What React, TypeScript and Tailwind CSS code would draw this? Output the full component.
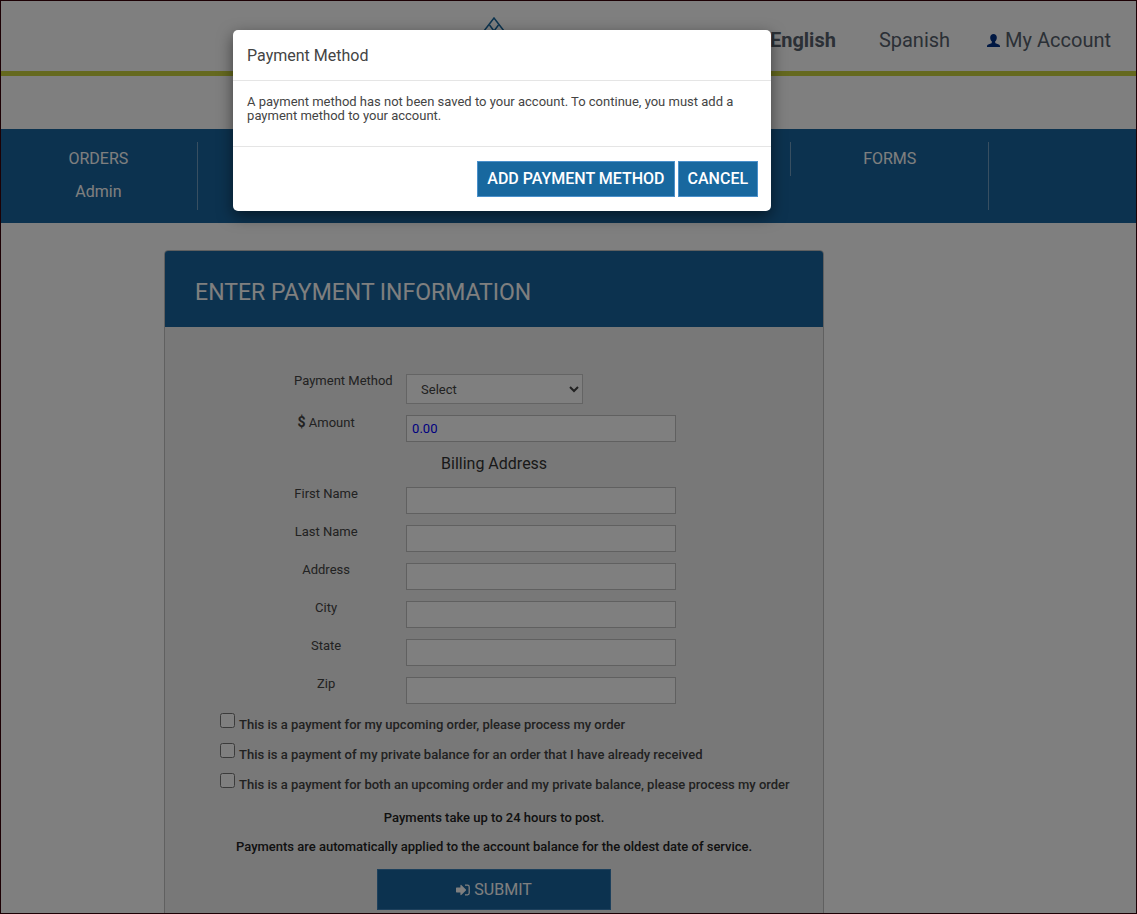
import React, { useState } from 'react';

interface NavColumn {
  id: string;
  items: string[];
}

const navColumns: NavColumn[] = [
  { id: 'orders', items: ['ORDERS', 'Admin'] },
  { id: 'col-2', items: [] },
  { id: 'col-3', items: [] },
  { id: 'col-4', items: [] },
  { id: 'forms', items: ['FORMS'] },
];

const addressFields = [
  { id: 'firstName', label: 'First Name' },
  { id: 'lastName', label: 'Last Name' },
  { id: 'address', label: 'Address' },
  { id: 'city', label: 'City' },
  { id: 'state', label: 'State' },
  { id: 'zip', label: 'Zip' },
];

const paymentOptions = [
  { id: 'upcoming', label: 'This is a payment for my upcoming order, please process my order' },
  { id: 'balance', label: 'This is a payment of my private balance for an order that I have already received' },
  { id: 'both', label: 'This is a payment for both an upcoming order and my private balance, please process my order' },
];

const inputClass = 'h-[27px] w-full border border-[#c0c0c0] bg-white px-[5px] text-[13px] text-[#0000ff]';
const modalButtonClass = 'h-9 border border-[#4a90cb] bg-[#18689f] px-[9px] text-base font-medium text-white';

function UserIcon() {
  return (
    <svg className="h-[13px] w-[13px]" viewBox="0 0 13 13" fill="#003087" aria-hidden="true">
      <path d="M6.5 0C4.6 0 3.2 1.3 3.2 3.4c0 1.6.6 3 1.600 3.900v1.200c0 .6-.4.9-1 1.100L1.300 10.600C.4 10.900 0 11.500 0 12.300V13h13v-.7c0-.8-.4-1.400-1.300-1.700L9.200 9.600c-.6-.2-1-.5-1-1.100V7.300c1-.9 1.600-2.300 1.600-3.900C9.800 1.300 8.400 0 6.500 0Z" />
    </svg>
  );
}

function SignInIcon() {
  return (
    <svg className="h-3 w-[14px]" viewBox="0 0 14 12" aria-hidden="true">
      <path d="M0 4.2c0-.4.2-.6.6-.6H4.4V1.4c0-.5.5-.7.9-.4l4.6 4.5c.3.3.3.7 0 1L5.3 11c-.4.3-.9.1-.9-.4V8.4H.6c-.4 0-.6-.2-.6-.6Z" fill="#fff" />
      <path d="M9 1.2h2.5c1 0 1.7.7 1.7 1.7v6.2c0 1-.7 1.7-1.7 1.7H9" fill="none" stroke="#fff" strokeWidth="1.3" />
    </svg>
  );
}

function Logo() {
  return (
    <svg className="h-10 w-14" viewBox="0 0 56 40" fill="none" stroke="#18689f" strokeWidth="1.5" aria-hidden="true">
      <path d="M4 32 28 1 52 32" />
      <path d="M20 25 28 14 36 25" />
      <path d="M23.5 8 28 14 32.5 8" />
    </svg>
  );
}

export default function App() {
  const [showModal, setShowModal] = useState(true);
  const [amount, setAmount] = useState('0.00');

  return (
    <div className="relative h-screen overflow-hidden bg-white pt-px font-['Roboto',sans-serif] text-[13px] leading-[14px] text-[#444]">
      {/* HEADER */}
      <header className="flex h-[75px] border-b-5 border-[#cbd23e]">
        <div className="flex w-[87%] shrink-0 justify-center pt-4 pr-px">
          <Logo />
        </div>
        <nav className="-ml-[50%] flex flex-1 items-center justify-end gap-x-[37px] pt-2 pr-[26px] text-xl whitespace-nowrap text-[#56606c]">
          <a href="#en" className="mr-[6px] font-bold">English</a>
          <a href="#es">Spanish</a>
          <a href="#account" className="flex items-center gap-[5px]">
            <UserIcon />
            My Account
          </a>
        </nav>
      </header>

      {/* MAIN NAV */}
      <nav className="mt-[53px] h-[94px] bg-[#18649e] pt-[13px]">
        <ul className="grid w-[87%] grid-cols-5 items-start text-center text-base text-white">
          {navColumns.map((column) => (
            <li
              key={column.id}
              className={
                column.items.length > 0
                  ? 'h-[68px] border-r border-[#709fc3]'
                  : 'h-[34px] border-r border-[#709fc3]'
              }
            >
              {column.items.map((item) => (
                <a key={item} href={`#${item}`} className="block leading-[33px]">{item}</a>
              ))}
            </li>
          ))}
        </ul>
      </nav>

      {/* PAYMENT FORM */}
      <main className="w-[87%] pt-[27px] pr-px">
        <section className="mx-auto w-full max-w-[660px] rounded-t border border-[#c0c0c0] bg-[#f0f0f0]">
          <h1 className="rounded-t-[3px] bg-[#18649e] px-[30px] pt-[26px] pb-[18px] text-[23px] leading-8 text-white">
            ENTER PAYMENT INFORMATION
          </h1>
          <form className="pt-[47px] pb-10" onSubmit={(e) => e.preventDefault()}>
            <div className="grid grid-cols-[64px_minmax(0,270px)] gap-x-12 gap-y-[11px] pl-[129px] text-center">
              <label htmlFor="method" className="whitespace-nowrap">Payment Method</label>
              <select id="method" className="h-[30px] w-[177px] border border-[#c8c8c8] bg-white pl-[10px] text-[13px]">
                <option>Select</option>
              </select>
              <label htmlFor="amount" className="whitespace-nowrap">
                <span className="text-sm leading-none font-bold">$</span> Amount
              </label>
              <input id="amount" className={inputClass} value={amount} onChange={(e) => setAmount(e.target.value)} />
            </div>

            <h2 className="pt-[10px] pb-[11px] text-center text-base text-[#333]">Billing Address</h2>

            <div className="grid grid-cols-[64px_minmax(0,270px)] gap-x-12 gap-y-[11px] pl-[129px] text-center">
              {addressFields.map((field) => (
                <React.Fragment key={field.id}>
                  <label htmlFor={field.id} className="whitespace-nowrap">{field.label}</label>
                  <input id={field.id} className={inputClass} />
                </React.Fragment>
              ))}
            </div>

            <div className="flex flex-col gap-[11px] pt-[9px] pl-[55px] font-medium">
              {paymentOptions.map((option) => (
                <div key={option.id} className="flex items-start gap-1">
                  <input id={option.id} type="checkbox" className="h-[15px] w-[15px]" />
                  <label htmlFor={option.id} className="pt-[5px] whitespace-nowrap">{option.label}</label>
                </div>
              ))}
            </div>

            <div className="flex flex-col items-center gap-[15px] pt-[19px] font-medium text-[#222]">
              <p>Payments take up to 24 hours to post.</p>
              <p>Payments are automatically applied to the account balance for the oldest date of service.</p>
              <button
                type="submit"
                className="flex h-[41px] w-[234px] items-center justify-center gap-1 border border-[#3a80b8] bg-[#18649e] text-base font-normal text-white"
              >
                <SignInIcon />
                SUBMIT
              </button>
            </div>
          </form>
        </section>
      </main>

      {/* MODAL */}
      {showModal && (
        <div className="absolute inset-0 bg-black/50">
          <div className="w-[87%] pt-[30px] pl-[15px]">
            <div
              role="dialog"
              aria-labelledby="modal-title"
              className="mx-auto w-full max-w-[538px] rounded-[5px] bg-white shadow-[0_5px_15px_rgba(0,0,0,0.5)]"
            >
              <h2 id="modal-title" className="border-b border-[#e5e5e5] px-[14px] pt-[14px] pb-3 text-base">Payment Method</h2>
              <p className="border-b border-[#e5e5e5] px-[14px] pt-[14px] pb-[23px]">
                A payment method has not been saved to your account. To continue, you must add a payment method to your account.
              </p>
              <div className="flex justify-end gap-[3px] py-[14px] pr-[13px]">
                <button type="button" className={modalButtonClass}>ADD PAYMENT METHOD</button>
                <button type="button" className={modalButtonClass} onClick={() => setShowModal(false)}>CANCEL</button>
              </div>
            </div>
          </div>
        </div>
      )}

      {/* Window frame */}
      <div className="pointer-events-none absolute inset-0 border border-[#1c0004]" />
    </div>
  );
}
